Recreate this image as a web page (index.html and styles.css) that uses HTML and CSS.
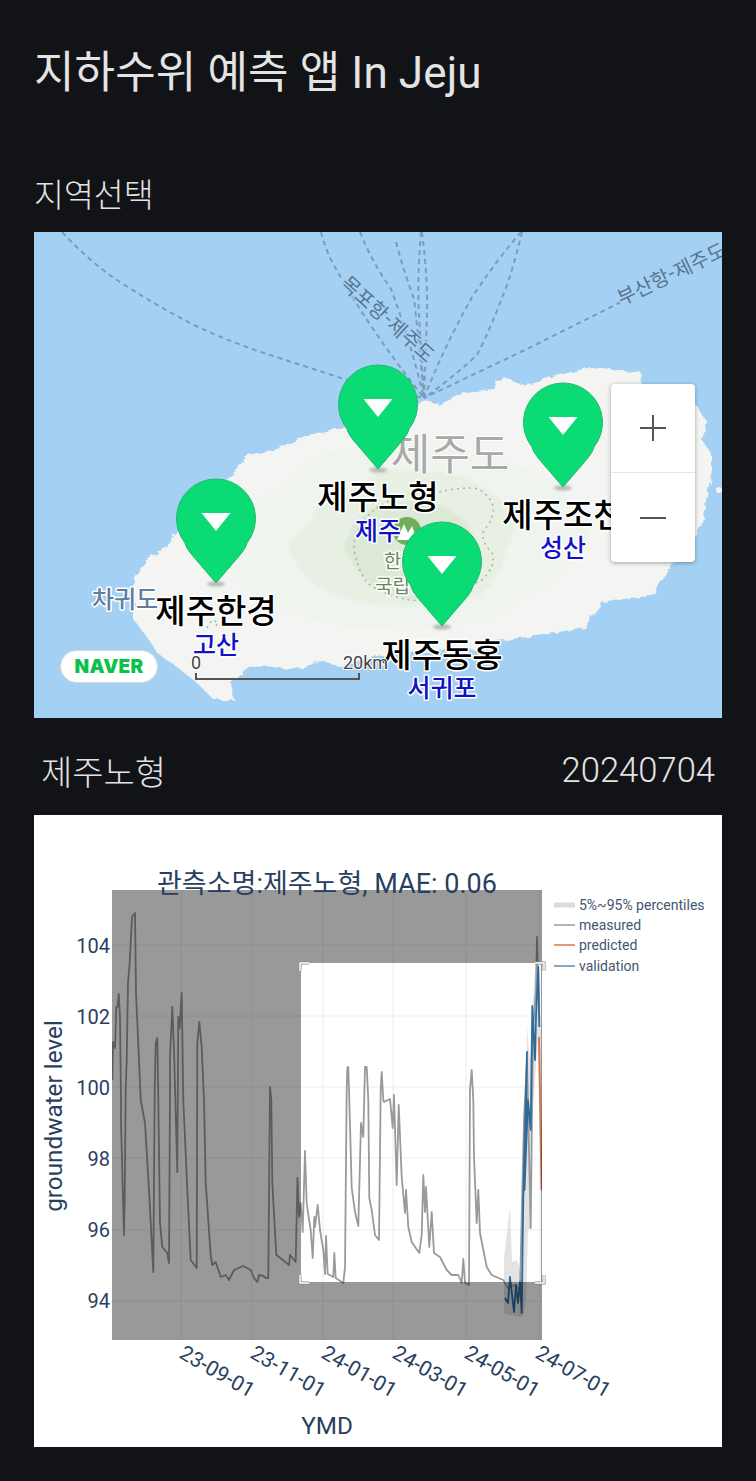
FILE: index.html
```html
<!DOCTYPE html>
<html lang="ko">
<head>
<meta charset="utf-8">
<title>지하수위 예측 앱 In Jeju</title>
<link rel="stylesheet" href="styles.css">
</head>
<body>
<main class="page">
  <h1 class="title">지하수위 예측 앱 In Jeju</h1>
  <h2 class="section-label">지역선택</h2>

  <section class="map">
    <svg class="map-canvas" viewBox="34 232 688 486" width="688" height="486" xmlns="http://www.w3.org/2000/svg">
      <defs>
        <filter id="rough" x="-5%" y="-5%" width="110%" height="110%">
          <feTurbulence type="fractalNoise" baseFrequency="0.09" numOctaves="3" seed="4"/>
          <feDisplacementMap in="SourceGraphic" scale="7"/>
        </filter>
        <filter id="soft" x="-10%" y="-10%" width="120%" height="120%">
          <feTurbulence type="fractalNoise" baseFrequency="0.03" numOctaves="2" seed="8" result="n"/>
          <feDisplacementMap in="SourceGraphic" in2="n" scale="12"/>
          <feGaussianBlur stdDeviation="1.2"/>
        </filter>
        <filter id="blur-shadow" x="-50%" y="-100%" width="200%" height="300%">
          <feGaussianBlur stdDeviation="1.5"/>
        </filter>
        <symbol id="pin" viewBox="0 0 80 110" overflow="visible">
          <ellipse class="pin-shadow" filter="url(#blur-shadow)" cx="40" cy="105" rx="9" ry="2.500"/>
          <path class="pin-body" d="M40 104 L16 76 Q10 69 8.800 63.700 A39.500 39.500 0 1 1 71.200 63.700 Q70 69 64 76 Z"/>
          <path class="pin-arrow" d="M25.500 34 H54.500 L40 52 Z"/>
        </symbol>
      </defs>

      <rect class="water" x="34" y="232" width="688" height="486"/>

      <g class="ferry">
        <path d="M62 232 Q90 262 117 280 Q155 305 194 325 Q230 342 267 354 L344 379 L424 398"/>
        <path d="M321 232 Q326 252 336 269 Q370 330 424 398"/>
        <path d="M360 232 Q372 262 391 289 Q410 340 424 398"/>
        <path d="M396 242 Q404 272 414 299 Q420 350 424 398"/>
        <path d="M421 232 Q417 280 419 315 L424 398"/>
        <path d="M422 232 Q428 280 427 315 L424 398"/>
        <path d="M521 232 Q495 262 471 299 Q445 345 424 398"/>
        <path d="M522 232 Q516 258 507 285 Q490 330 477 355 Q450 380 424 398"/>
        <path d="M621 302 L527 349 L424 398"/>
      </g>

      <path class="land" filter="url(#rough)" d="M134 577 L147 560 L167 547 L177 533 L190 515 L215 490 L237 470 L247 455 L277 449 L307 435 L344 429 L385 412 L424 402 L437 404 L464 392 L494 389 L504 377 L521 385 L560 375 L591 367 L641 372 L642 384 L680 395 L696 405 L707 422 L702 440 L712 455 L712 470 L708 490 L701 527 L671 567 L654 593 L604 603 L584 627 L544 635 L504 640 L470 650 L420 652 L380 655 L344 667 L321 662 L291 670 L261 665 L247 670 L231 683 L234 700 L214 700 L197 683 L181 670 L157 653 L147 637 L134 620 Z"/>
      <circle class="land" cx="719" cy="490" r="3"/>

      <g filter="url(#soft)">
        <path class="relief-1" d="M225 565 Q250 490 330 455 Q420 430 520 465 Q580 490 590 540 Q560 590 480 620 Q400 640 320 620 Q250 610 225 565 Z"/>
        <path class="relief-2" d="M290 550 Q320 480 400 470 Q480 470 510 510 Q520 560 480 595 Q410 620 350 600 Q300 585 290 550 Z"/>
        <path class="relief-3" d="M345 545 Q365 500 420 500 Q470 510 478 545 Q470 590 420 600 Q360 595 345 545 Z"/>
      </g>
      <path class="park-edge" d="M374 510 Q352 530 354 550 Q358 570 367 583 Q400 605 440 600 L482 580 Q497 565 492 553 Q480 540 484 530 Q497 515 492 503 Q485 490 474 488 Q455 488 439 492 Q400 490 374 510 Z"/>
      <path class="park-edge" d="M207 628 L212 620 L218 622 L215 628"/>

      <circle class="peak-bg" cx="407" cy="531" r="14"/>
      <path class="peak" d="M397 540 L404 524 L408 533 L412 526 L417 540 Z"/>
      <text class="lbl-park" x="410" y="568" text-anchor="middle">한라산</text>
      <text class="lbl-park" x="410" y="593" text-anchor="middle">국립공원</text>

      <text class="lbl-ferry" transform="translate(387 320) rotate(42)" text-anchor="middle" dy="6">목포항-제주도</text>
      <text class="lbl-ferry" transform="translate(672 275) rotate(-25.500)" text-anchor="middle" dy="6">부산항-제주도</text>

      <text class="lbl-island" x="450" y="470" text-anchor="middle">제주도</text>
      <text class="lbl-isle" x="125" y="608" text-anchor="middle">차귀도</text>

      <text class="lbl-town" x="378" y="540" text-anchor="middle">제주</text>
      <text class="lbl-town" x="216" y="654" text-anchor="middle">고산</text>
      <text class="lbl-town" x="563" y="557" text-anchor="middle">성산</text>
      <text class="lbl-town" x="442" y="697" text-anchor="middle">서귀포</text>

      <use href="#pin" x="338" y="365" width="80" height="110"/>
      <use href="#pin" x="176" y="479" width="80" height="110"/>
      <use href="#pin" x="523" y="383" width="80" height="110"/>
      <use href="#pin" x="402" y="522" width="80" height="110"/>

      <text class="lbl-pin" x="378" y="509" text-anchor="middle">제주노형</text>
      <text class="lbl-pin" x="216" y="623" text-anchor="middle">제주한경</text>
      <text class="lbl-pin" x="563" y="527" text-anchor="middle">제주조천</text>
      <text class="lbl-pin" x="442" y="667" text-anchor="middle">제주동홍</text>

      <text class="lbl-scale" x="196" y="669" text-anchor="middle">0</text>
      <text class="lbl-scale" x="343" y="669">20km</text>
      <path class="scale-bar" d="M196 673 V679 H359 V673"/>
    </svg>

    <div class="naver"><span class="naver-text">NAVER</span></div>

    <div class="zoom-control">
      <div class="zoom-btn">
        <svg width="26" height="26" viewBox="0 0 26 26" xmlns="http://www.w3.org/2000/svg"><path class="zoom-icon" d="M0 13 H26 M13 0 V26"/></svg>
      </div>
      <div class="zoom-btn">
        <svg width="26" height="26" viewBox="0 0 26 26" xmlns="http://www.w3.org/2000/svg"><path class="zoom-icon" d="M0 13 H26"/></svg>
      </div>
    </div>
  </section>

  <div class="station-row">
    <span class="station-name">제주노형</span>
    <span class="station-date">20240704</span>
  </div>

  <section class="chart">
    <svg class="chart-canvas" viewBox="34 815 688 632" width="688" height="632" xmlns="http://www.w3.org/2000/svg">
      <defs>
        <clipPath id="plot-clip"><rect x="112" y="890" width="430" height="450"/></clipPath>
      </defs>

      <g class="grid">
        <path d="M112 945 H542 M112 1016 H542 M112 1087 H542 M112 1158 H542 M112 1230 H542 M112 1301 H542"/>
        <path d="M181 890 V1340 M252 890 V1340 M323 890 V1340 M393 890 V1340 M466 890 V1340 M540 890 V1340"/>
      </g>

      <g clip-path="url(#plot-clip)">
        <path class="band" d="M504 1258 L510 1207 L512 1262 L516.700 1260 L521.700 1273 L524 1197 L527 1027 L530 1060 L533 1000 L537 937 L539 993 L541 1037 L541.700 1190 L540 1190 L538 1040 L532 1120 L531 1228 L528 1230 L526 1300 L523 1317 L510 1315 L504 1313 Z"/>
        <path class="measured" d="M112.300 1080 L113 1042 L115 1048 L116.300 1007 L117.500 1007 L118.700 994 L120 1017 L121 1100 L121 1123 L124 1235 L124.700 1197 L125.700 1090 L126.700 1060 L128 983 L129.700 963 L132 917 L135 913 L136 993 L139 1060 L140.700 1100 L145 1123 L149 1190 L153.300 1272 L154.700 1090 L155.700 1043 L157.300 1038 L158.300 1100 L160 1223 L162.300 1247 L167.300 1253 L169 1263 L170 1090 L170 1057 L172.300 1007 L174 1050 L177.300 1172 L178.300 1017 L179.700 1028 L181.700 993 L183.300 1100 L187.300 1190 L190.700 1260 L196.700 1268 L197.300 1043 L199.300 1022 L201.700 1047 L204 1100 L205.700 1183 L210.700 1255 L212.300 1265 L215.700 1262 L220.700 1277 L225.700 1275 L229 1280 L234 1270 L243.300 1266 L250.700 1270 L254 1278 L257.300 1282 L259 1275 L263.300 1276 L265.700 1278 L268.300 1278 L270 1087 L271.300 1100 L272.300 1183 L276.300 1255 L279 1257 L284 1261 L289 1265 L290 1255 L295.700 1262 L297.500 1178 L299 1217 L300.700 1203 L302.700 1232 L305 1151 L306.700 1203 L308.300 1215 L310.700 1230 L312.700 1258 L314.300 1217 L315 1227 L317.700 1205 L320 1230 L323.300 1250 L325 1274 L326 1236 L327.700 1274 L333.300 1277 L334.300 1253 L335.700 1278 L343.300 1283 L345 1267 L346.700 1090 L347.300 1068 L348.300 1067 L349.300 1100 L351.700 1188 L355 1212 L358.300 1226 L361 1123 L363.300 1137 L365 1067 L366.700 1067 L368.300 1100 L369.300 1198 L371.700 1210 L375 1235 L379 1240 L380.700 1090 L381.700 1072 L383.300 1100 L384 1102 L390 1099 L392.700 1128 L394 1095 L396.700 1185 L398.700 1105 L401.700 1177 L405 1213 L406 1190 L408.300 1227 L411.700 1242 L419.300 1253 L421.700 1235 L423.300 1175 L425 1212 L426 1187 L429.300 1247 L431.700 1212 L434 1253 L440 1257 L446.700 1270 L451.700 1275 L458.300 1275 L461.700 1283 L463.300 1259 L465 1283 L469 1285 L470 1090 L471.700 1070 L473.300 1100 L474 1157 L476.700 1223 L478.300 1190 L480 1233 L486.700 1267 L491.700 1275 L503.300 1280 L508 1288 L515 1285 L520 1290 L524 1120 L527 1060 L530.700 1228 L533 1030 L536 990 L537 937 L539.300 1020"/>
        <path class="predicted" d="M539 1037 L541.700 1190"/>
        <path class="validation" d="M505 1298 L508 1303 L510 1277 L514 1312 L516 1285 L518 1303 L520 1282 L521.700 1313 L523.300 1197 L527 1052 L524.500 1190 L528 1100 L530.700 1130 L532.300 1006 L535 1060 L536 1017 L538.300 967 L539.300 1027"/>
      </g>

      <path class="selection-mask" fill-rule="evenodd" d="M112 890 H542 V1340 H112 Z M301 963 V1282 H541 V963 Z"/>

      <g>
        <path class="handle-out" d="M300 971 V963 H309 M535 963 H544 V971 M300 1275 V1283 H309 M535 1283 H544 V1275"/>
        <path class="handle-in" d="M300 971 V963 H309 M535 963 H544 V971 M300 1275 V1283 H309 M535 1283 H544 V1275"/>
      </g>

      <text class="chart-title" x="327" y="893" text-anchor="middle">관측소명:제주노형, MAE: 0.06</text>

      <g class="y-ticks" text-anchor="end">
        <text x="110" y="953">104</text>
        <text x="110" y="1024">102</text>
        <text x="110" y="1095">100</text>
        <text x="110" y="1166">98</text>
        <text x="110" y="1237">96</text>
        <text x="110" y="1308">94</text>
      </g>
      <text class="axis-title" transform="translate(62 1116) rotate(-90)" text-anchor="middle">groundwater level</text>

      <g class="x-ticks">
        <text transform="translate(178 1357) rotate(30)">23-09-01</text>
        <text transform="translate(249 1357) rotate(30)">23-11-01</text>
        <text transform="translate(320 1357) rotate(30)">24-01-01</text>
        <text transform="translate(391 1357) rotate(30)">24-03-01</text>
        <text transform="translate(463 1357) rotate(30)">24-05-01</text>
        <text transform="translate(534 1357) rotate(30)">24-07-01</text>
      </g>
      <text class="axis-title" x="327" y="1434" text-anchor="middle">YMD</text>

      <path class="swatch-band" d="M554 905 H575"/>
      <path class="swatch-measured" d="M554 925 H575"/>
      <path class="swatch-predicted" d="M554 945 H575"/>
      <path class="swatch-validation" d="M554 966 H575"/>
      <g class="legend">
        <text x="579" y="910">5%~95% percentiles</text>
        <text x="579" y="930">measured</text>
        <text x="579" y="950">predicted</text>
        <text x="579" y="971">validation</text>
      </g>
    </svg>
  </section>
</main>
</body>
</html>
```
FILE: styles.css
```css
* { box-sizing: border-box; }

html, body { margin: 0; padding: 0; }

body {
  background: #111317;
  color: #e4e4e4;
  font-family: Roboto, "Noto Sans CJK KR", sans-serif;
  width: 756px;
  height: 1481px;
  overflow: hidden;
}

.page {
  padding: 0 34px;
  display: flex;
  flex-direction: column;
}

.title {
  margin: 43px 0 0 0;
  font-size: 44px;
  letter-spacing: 0.12px;
  line-height: 60px;
  font-weight: 400;
}

.section-label {
  margin: 70px 0 0 0;
  font-size: 32.5px;
  line-height: 46px;
  font-weight: 300;
}

.map {
  position: relative;
  margin-top: 13px;
  width: 688px;
  height: 486px;
  overflow: hidden;
}

.map-canvas, .chart-canvas { display: block; }

.water { fill: #a4d1f3; }
.land { fill: #f4f4f3; }
.relief-1 { fill: #f0f4ee; }
.relief-2 { fill: #e8f0e4; }
.relief-3 { fill: #dde9d7; }

.ferry path {
  fill: none;
  stroke: #7d9bba;
  stroke-width: 2;
  stroke-dasharray: 5 4;
}

.park-edge {
  fill: none;
  stroke: #9dbb95;
  stroke-width: 1.5;
  stroke-dasharray: 2 4;
}

.peak-bg { fill: #6fae5a; }
.peak { fill: #fff; }

.map text {
  font-family: "Noto Sans CJK KR", Roboto, sans-serif;
  paint-order: stroke;
  stroke-linejoin: round;
}

.lbl-park {
  font-size: 19px;
  fill: #648a55;
  stroke: #fff;
  stroke-width: 3px;
}

.lbl-ferry {
  font-size: 20px;
  fill: #5a7590;
  stroke: #a4d1f3;
  stroke-width: 3px;
}

.lbl-island {
  font-size: 43px;
  fill: #a9a9a9;
  stroke: #fff;
  stroke-width: 2px;
}

.lbl-isle {
  font-size: 24px;
  font-weight: 500;
  fill: #5f7f9f;
  stroke: #fff;
  stroke-width: 3px;
}

.lbl-town {
  font-size: 25px;
  font-weight: 500;
  fill: #1212c4;
  stroke: #fff;
  stroke-width: 3px;
}

.lbl-pin {
  font-size: 33px;
  font-weight: 500;
  fill: #000;
  stroke: #fff;
  stroke-width: 3px;
}

.map text.lbl-scale {
  font-family: Roboto, sans-serif;
  font-size: 18px;
  fill: #444;
  stroke: #fff;
  stroke-width: 2px;
}

.scale-bar {
  fill: none;
  stroke: #555;
  stroke-width: 2;
}

.pin-body {
  fill: #0bdb75;
  stroke: #1fb96f;
  stroke-width: 1;
}

.pin-arrow { fill: #fff; }
.pin-shadow { fill: #555; opacity: 0.4; }

.naver {
  position: absolute;
  left: 26px;
  top: 418px;
  width: 98px;
  height: 33px;
  background: #fff;
  border: 1px solid #d8d8d8;
  border-radius: 17px;
  display: flex;
  align-items: center;
  justify-content: center;
}

.naver-text {
  font-family: Inter, Roboto, sans-serif;
  font-weight: 900;
  font-size: 19px;
  letter-spacing: 0.3px;
  color: #0ac14c;
}

.zoom-control {
  position: absolute;
  left: 577px;
  top: 152px;
  width: 84px;
  height: 178px;
  background: #fff;
  border-radius: 4px;
  box-shadow: 0 1px 4px rgba(0, 0, 0, 0.35);
  display: flex;
  flex-direction: column;
}

.zoom-btn {
  height: 88px;
  display: flex;
  align-items: center;
  justify-content: center;
}

.zoom-btn + .zoom-btn {
  height: 90px;
  border-top: 1px solid #e4e4e4;
}

.zoom-icon {
  fill: none;
  stroke: #555;
  stroke-width: 2;
}

.station-row {
  display: flex;
  justify-content: space-between;
  align-items: center;
  padding: 0 7px;
  margin-top: 29px;
  height: 46px;
  font-size: 34px;
  font-weight: 300;
}

.station-date {
  font-size: 34.6px;
  font-weight: 300;
}

.chart {
  margin-top: 22px;
  width: 688px;
  height: 632px;
  background: #fff;
}

.grid path {
  fill: none;
  stroke: #e9eef3;
  stroke-width: 1;
}

.band { fill: #d0d0d0; opacity: 0.6; }

.measured {
  fill: none;
  stroke: #9a9a9a;
  stroke-width: 1.8;
  stroke-linejoin: round;
}

.predicted {
  fill: none;
  stroke: #d9784f;
  stroke-width: 2;
}

.validation {
  fill: none;
  stroke: #2f6a9c;
  stroke-width: 1.8;
  stroke-linejoin: round;
}

.selection-mask { fill: #000; fill-opacity: 0.4; }

.handle-out {
  fill: none;
  stroke: #888;
  stroke-width: 3;
}

.handle-in {
  fill: none;
  stroke: #fff;
  stroke-width: 1.5;
}

.chart text {
  font-family: Roboto, "Noto Sans CJK KR", sans-serif;
  fill: #2a3f5f;
}

.chart .chart-title { font-size: 27px; }
.y-ticks text { font-size: 20px; }
.x-ticks text { font-size: 21px; }
.chart .axis-title { font-size: 24.3px; }
.legend text { font-size: 14px; fill: #445670; }

.swatch-band { stroke: #dcdcdc; stroke-width: 5; }
.swatch-measured { stroke: #9a9a9a; stroke-width: 1.5; }
.swatch-predicted { stroke: #d9784f; stroke-width: 1.5; }
.swatch-validation { stroke: #5b8db5; stroke-width: 1.5; }
```
